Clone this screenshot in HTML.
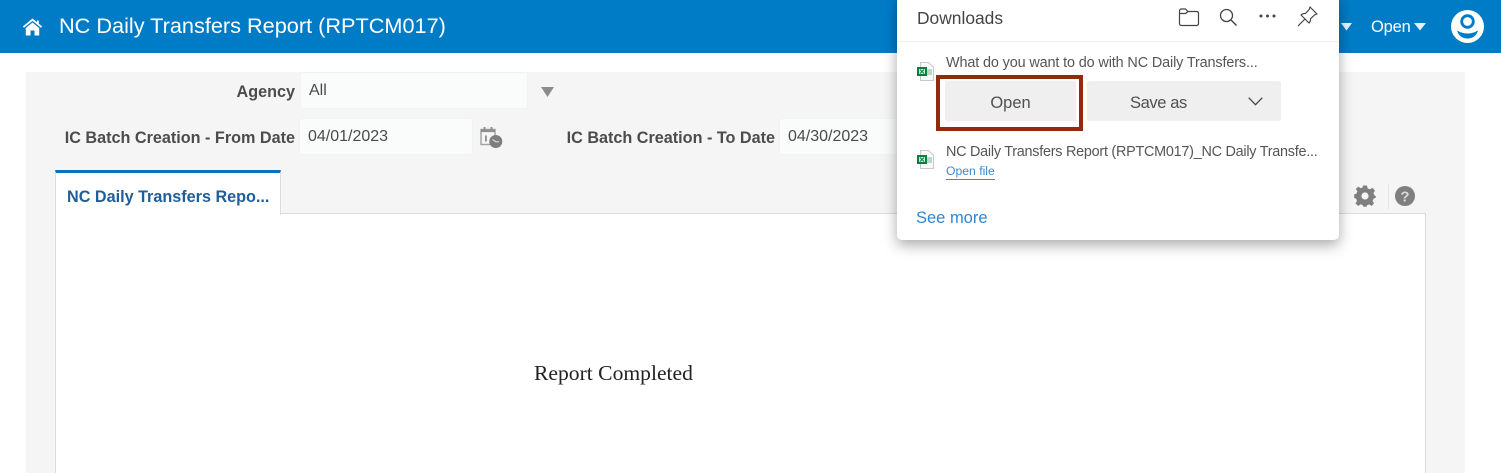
<!DOCTYPE html>
<html lang="en">
<head>
<meta charset="utf-8">
<title>NC Daily Transfers Report</title>
<style>
html,body{margin:0;padding:0;background:#fff}
body{position:relative;width:1501px;height:473px;overflow:hidden;font-family:"Liberation Sans",sans-serif}
.a{position:absolute;white-space:nowrap}
svg{position:absolute;overflow:visible}
.lbl{font-weight:bold;font-size:16.2px;color:#4c4c4c;line-height:20px;text-align:right}
.inp{background:#fafbfb;border-radius:2px;box-shadow:0 0 1px #e4e4e4;font-size:16px;color:#4a4a4a;line-height:35px;box-sizing:border-box}
.dl{color:#555;font-size:14.4px;line-height:18px}
</style>
</head>
<body>
<div class="a" style="left:0;top:0;width:1501px;height:53px;background:#007cc7"></div>
<svg style="left:22px;top:17px" width="21" height="19" viewBox="0 0 21 19"><path d="M10.5 1.5 L0.8 9.5 L2 10.8 L10.5 3.9 L19 10.8 L20.2 9.5 L16.8 6.7 V3.5 H15 V5.2 Z" fill="#fff"/><path d="M10.5 5.5 L3.8 11 V18.5 H8.5 V13.5 H12.5 V18.5 H17.2 V11 Z" fill="#fff"/></svg>
<div class="a" style="left:59px;top:12px;font-size:21.7px;line-height:28px;color:#fff">NC Daily Transfers Report (RPTCM017)</div>
<svg style="left:1341px;top:23px" width="11" height="8" viewBox="0 0 11 8"><path d="M0 0H11L5.5 7.5Z" fill="#e6f2fa"/></svg>
<div class="a" style="left:1371px;top:17px;font-size:16.5px;line-height:20px;color:#fff;letter-spacing:-.2px">Open</div>
<svg style="left:1414px;top:23px" width="12" height="8" viewBox="0 0 12 8"><path d="M0 0H12L6 7.5Z" fill="#e6f2fa"/></svg>
<svg style="left:1451px;top:10px" width="33" height="33" viewBox="0 0 33 33"><circle cx="16.5" cy="16.5" r="16.5" fill="#fff"/><circle cx="16.5" cy="11.5" r="5.8" fill="none" stroke="#007cc7" stroke-width="2.8"/><path d="M6 20.5 Q16.5 26.5 27 20.5 Q24.5 28.5 16.5 28.5 Q8.5 28.5 6 20.5Z" fill="#007cc7"/></svg>

<div class="a" style="left:26px;top:72px;width:1439px;height:401px;background:#f5f5f5"></div>

<div class="a lbl" style="left:60px;top:82px;width:235px">Agency</div>
<div class="a inp" style="left:301px;top:73px;width:226px;padding-left:8px">All</div>
<svg style="left:541px;top:87px" width="13" height="10" viewBox="0 0 13 10"><path d="M0 0H13L6.5 10Z" fill="#8c8c8c"/></svg>
<div class="a lbl" style="left:60px;top:128px;width:235px">IC Batch Creation - From Date</div>
<div class="a inp" style="left:300px;top:119px;width:172px;padding-left:8px;line-height:35px">04/01/2023</div>
<svg style="left:480px;top:126px" width="23" height="23" viewBox="0 0 23 23"><rect x="1" y="3.5" width="14" height="15" fill="none" stroke="#a0a0a0" stroke-width="1.4"/><rect x="1" y="3.5" width="14" height="2.6" fill="#8f8f8f"/><rect x="3.5" y="1" width="2" height="4" fill="#8f8f8f"/><rect x="10.5" y="1" width="2" height="4" fill="#8f8f8f"/><rect x="5" y="9.5" width="1.8" height="6" fill="#8f8f8f"/><circle cx="15.8" cy="15.5" r="6.5" fill="#7d7d7d"/><path d="M12.5 13.5 L15.8 15.8 H19" fill="none" stroke="#d8d8d8" stroke-width="1.2"/></svg>
<div class="a lbl" style="left:540px;top:128px;width:235px">IC Batch Creation - To Date</div>
<div class="a inp" style="left:780px;top:119px;width:172px;padding-left:8px;line-height:35px">04/30/2023</div>

<div class="a" style="left:55px;top:213px;width:1371px;height:260px;box-sizing:border-box;background:#fff;border:1px solid #dcdcdc;border-bottom:0"></div>
<div class="a" style="left:55px;top:170px;width:226px;height:45px;box-sizing:border-box;background:#fff;border:1px solid #dcdcdc;border-top:3px solid #0a72b9;border-bottom:0"></div>
<div class="a" style="left:67px;top:187px;font-size:16.2px;font-weight:bold;line-height:20px;color:#1f5e9a">NC Daily Transfers Repo...</div>
<div class="a" style="left:534px;top:360px;font-family:'Liberation Serif',serif;font-size:21.6px;line-height:26px;color:#222">Report Completed</div>

<svg style="left:1354px;top:185px" width="22" height="22" viewBox="0 0 22 22"><path d="M9 0.5H13L13.6 3.4 15.9 4.4 18.4 2.8 21 5.6 19.4 8 20.4 10.3 21.8 11.2V12.8L19.6 13.6 18.6 16 20 18.4 17.6 21 15.2 19.4 13 20.3 12.6 21.8H9.4L8.8 20.2 6.6 19.3 4.2 21 1.4 18.4 3 16 2.2 13.8 0.2 13V9.4L2.4 8.6 3.4 6.4 1.8 4 4.4 1.6 6.8 3.2 8.6 2.4Z" fill="#7f7f7f"/><circle cx="11" cy="11" r="3.6" fill="#f5f5f5"/></svg>
<div class="a" style="left:1388px;top:184px;width:1px;height:26px;background:#e6e6e6"></div>
<svg style="left:1395px;top:186px" width="20" height="20" viewBox="0 0 20 20"><circle cx="10" cy="10" r="10" fill="#7f7f7f"/><text x="10" y="15.5" text-anchor="middle" font-family="Liberation Sans,sans-serif" font-size="15" font-weight="bold" fill="#d8d8d8">?</text></svg>

<div class="a" style="left:897px;top:-6px;width:442px;height:246px;background:#fff;border-radius:5px;box-shadow:0 5px 14px rgba(0,0,0,.34)"></div>
<div class="a" style="left:917px;top:8px;font-size:17.4px;line-height:21px;color:#444">Downloads</div>
<svg style="left:1178px;top:8px" width="22" height="19" viewBox="0 0 22 19"><path d="M1.5 5.5 V3 Q1.5 1 3.5 1 H7.5 L10 3.5 H18.5 Q20.5 3.5 20.5 5.5 V15.5 Q20.5 17.5 18.5 17.5 H3.5 Q1.5 17.5 1.5 15.5 Z M1.5 5.5 H7.5 L10 3.5" fill="none" stroke="#444" stroke-width="1.2"/></svg>
<svg style="left:1219px;top:8px" width="19" height="19" viewBox="0 0 19 19"><circle cx="7.5" cy="7.5" r="6" fill="none" stroke="#444" stroke-width="1.3"/><path d="M11.8 11.8 L17.5 17.5" stroke="#444" stroke-width="1.4"/></svg>
<svg style="left:1259px;top:14px" width="17" height="4" viewBox="0 0 17 4"><circle cx="2" cy="2" r="1.5" fill="#444"/><circle cx="8.5" cy="2" r="1.5" fill="#444"/><circle cx="15" cy="2" r="1.5" fill="#444"/></svg>
<svg style="left:1297px;top:6px" width="21" height="21" viewBox="0 0 21 21"><path d="M13 1 L20 8 L17.5 9 L13.5 12.8 Q13.6 15.5 12 17 L4 9 Q6 7.2 8.5 7.5 L12.2 3.5 Z M8 13 L1 20" fill="none" stroke="#444" stroke-width="1.2" stroke-linejoin="round"/></svg>
<div class="a" style="left:897px;top:41px;width:442px;height:1px;background:#f0f0f0"></div>

<svg style="left:917px;top:62px" width="17" height="19" viewBox="0 0 17 19"><path d="M3.5 .5H11.5L16.5 5V18.5H3.5Z" fill="#fafafa" stroke="#c9c9c9"/><rect x="9" y="7" width="6" height="6" fill="#b9dcc6"/><rect x="0" y="5" width="10" height="9" fill="#107c41"/><rect x="2" y="7" width="6" height="5" fill="#cfe8d8"/><path d="M3 7.5 L7 11.5 M7 7.5 L3 11.5" stroke="#107c41" stroke-width="1"/></svg>
<div class="a dl" style="left:946px;top:54px;letter-spacing:-.12px">What do you want to do with NC Daily Transfers...</div>
<div class="a" style="left:945px;top:81px;width:131px;height:40px;background:#efefef;border-radius:2px;text-align:center;font-size:16.5px;line-height:44px;color:#505050">Open</div>
<div class="a" style="left:1087px;top:81px;width:194px;height:40px;background:#efefef;border-radius:2px"></div>
<div class="a" style="left:1130px;top:92px;font-size:16.5px;line-height:22px;color:#505050;letter-spacing:-.4px">Save as</div>
<svg style="left:1248px;top:97px" width="15" height="9" viewBox="0 0 15 9"><path d="M.7 .7 L7.5 7.7 L14.3 .7" fill="none" stroke="#444" stroke-width="1.3"/></svg>
<div class="a" style="left:936px;top:75px;width:147px;height:56px;box-sizing:border-box;border:4px solid #93290f"></div>

<svg style="left:917px;top:150px" width="17" height="19" viewBox="0 0 17 19"><path d="M3.5 .5H11.5L16.5 5V18.5H3.5Z" fill="#fafafa" stroke="#c9c9c9"/><rect x="9" y="7" width="6" height="6" fill="#b9dcc6"/><rect x="0" y="5" width="10" height="9" fill="#107c41"/><rect x="2" y="7" width="6" height="5" fill="#cfe8d8"/><path d="M3 7.5 L7 11.5 M7 7.5 L3 11.5" stroke="#107c41" stroke-width="1"/></svg>
<div class="a dl" style="left:946px;top:143px;letter-spacing:-.25px">NC Daily Transfers Report (RPTCM017)_NC Daily Transfe...</div>
<div class="a" style="left:946px;top:162px;font-size:12.2px;line-height:18px;color:#3b8ad2;border-bottom:1px solid #3b8ad2;height:17px">Open file</div>
<div class="a" style="left:916px;top:208px;font-size:16.5px;line-height:21px;color:#2f86d1">See more</div>
</body>
</html>
